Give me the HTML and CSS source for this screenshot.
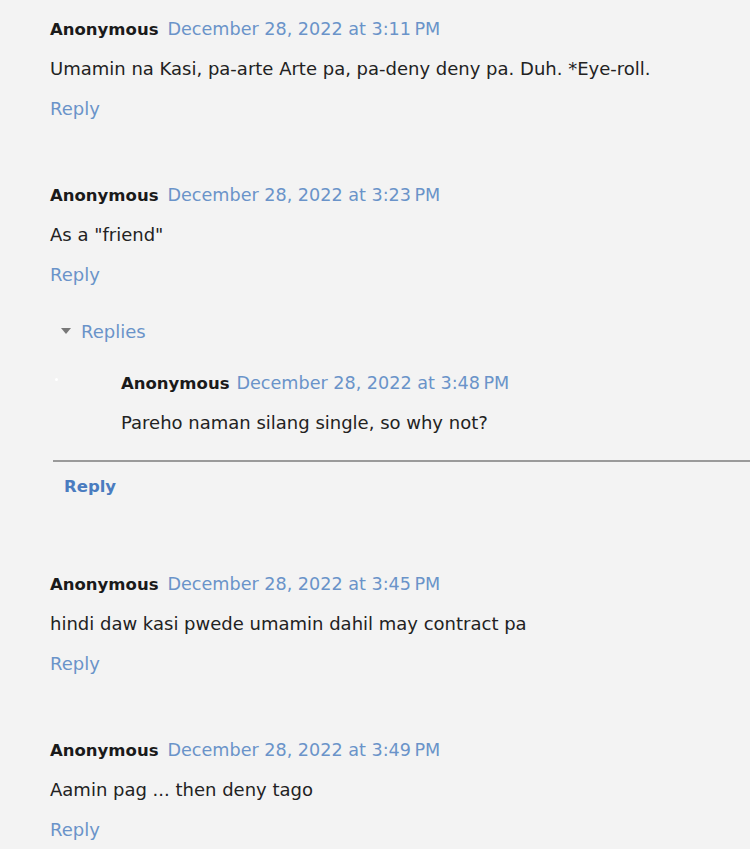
FILE: index.html
```html
<!DOCTYPE html>
<html>
	<head>
		<meta charset="utf-8">
		<title>Comments</title>
		<link rel="stylesheet" href="styles.css">
	</head>
	<body>
		<div class="comments">
			<div class="comment">
				<div class="comment-header"><cite class="user">Anonymous</cite><a class="datetime" href="javascript:;">December 28, 2022 at 3:11&#8239;PM</a></div>
				<p class="comment-content">Umamin na Kasi, pa-arte Arte pa, pa-deny deny pa. Duh. *Eye-roll.</p>
				<div class="comment-actions"><a href="javascript:;">Reply</a></div>
			</div>

			<div class="comment has-thread">
				<div class="comment-header"><cite class="user">Anonymous</cite><a class="datetime" href="javascript:;">December 28, 2022 at 3:23&#8239;PM</a></div>
				<p class="comment-content">As a "friend"</p>
				<div class="comment-actions"><a href="javascript:;">Reply</a></div>
				<div class="thread">
					<div class="thread-toggle"><span class="arrow"></span><a href="javascript:;">Replies</a></div>
					<div class="thread-chrome">
						<div class="reply">
							<span class="avatar-dot"></span>
							<div class="comment-header"><cite class="user">Anonymous</cite><a class="datetime" href="javascript:;">December 28, 2022 at 3:48&#8239;PM</a></div>
							<p class="comment-content">Pareho naman silang single, so why not?</p>
						</div>
						<div class="continue"><a href="javascript:;">Reply</a></div>
					</div>
				</div>
			</div>

			<div class="comment">
				<div class="comment-header"><cite class="user">Anonymous</cite><a class="datetime" href="javascript:;">December 28, 2022 at 3:45&#8239;PM</a></div>
				<p class="comment-content">hindi daw kasi pwede umamin dahil may contract pa</p>
				<div class="comment-actions"><a href="javascript:;">Reply</a></div>
			</div>

			<div class="comment">
				<div class="comment-header"><cite class="user">Anonymous</cite><a class="datetime" href="javascript:;">December 28, 2022 at 3:49&#8239;PM</a></div>
				<p class="comment-content">Aamin pag ... then deny tago</p>
				<div class="comment-actions"><a href="javascript:;">Reply</a></div>
			</div>
		</div>
	</body>
</html>
```

FILE: styles.css
```css
*{margin: 0;padding: 0;}
body{
	background: #f3f3f3;
	font-family: "DejaVu Sans", Verdana, sans-serif;
	font-size: 18px;
	color: #222;
	overflow: hidden;
}
a{color: #6a93c9;text-decoration: none;}
.comments{padding: 9px 0 0 50px;}
.comment{margin-bottom: 46px;}
.comment.has-thread{margin-bottom: 58px;}
.comment-header,.comment-content,.comment-actions,.thread-toggle,.continue{height: 40px;line-height: 40px;white-space: nowrap;}
.user{font-style: normal;font-weight: bold;font-size: 16.5px;color: #1a1a1a;margin-right: 9px;}
.datetime{font-size: 17.6px;}
.reply .user{margin-right: 7px;}
.thread{margin-top: 17px;}
.thread-toggle{padding-left: 11px;}
.thread-toggle a{margin-left: 10px;}
.arrow{display: inline-block;width: 0;height: 0;border-left: 5px solid transparent;border-right: 5px solid transparent;border-top: 6px solid #777;vertical-align: middle;position: relative;top: -2px;}
.thread-chrome{margin-left: 3px;margin-right: -50px;}
.reply{position: relative;padding: 11px 0 17px 68px;border-bottom: 2px solid #9a9a9a;}
.avatar-dot{position: absolute;left: 2px;top: 26px;width: 3px;height: 3px;background: #fff;border-radius: 50%;}
.continue{padding-left: 11px;margin-top: 4px;}
.continue a{font-weight: bold;font-size: 16.5px;color: #4a7cc0;}
```
